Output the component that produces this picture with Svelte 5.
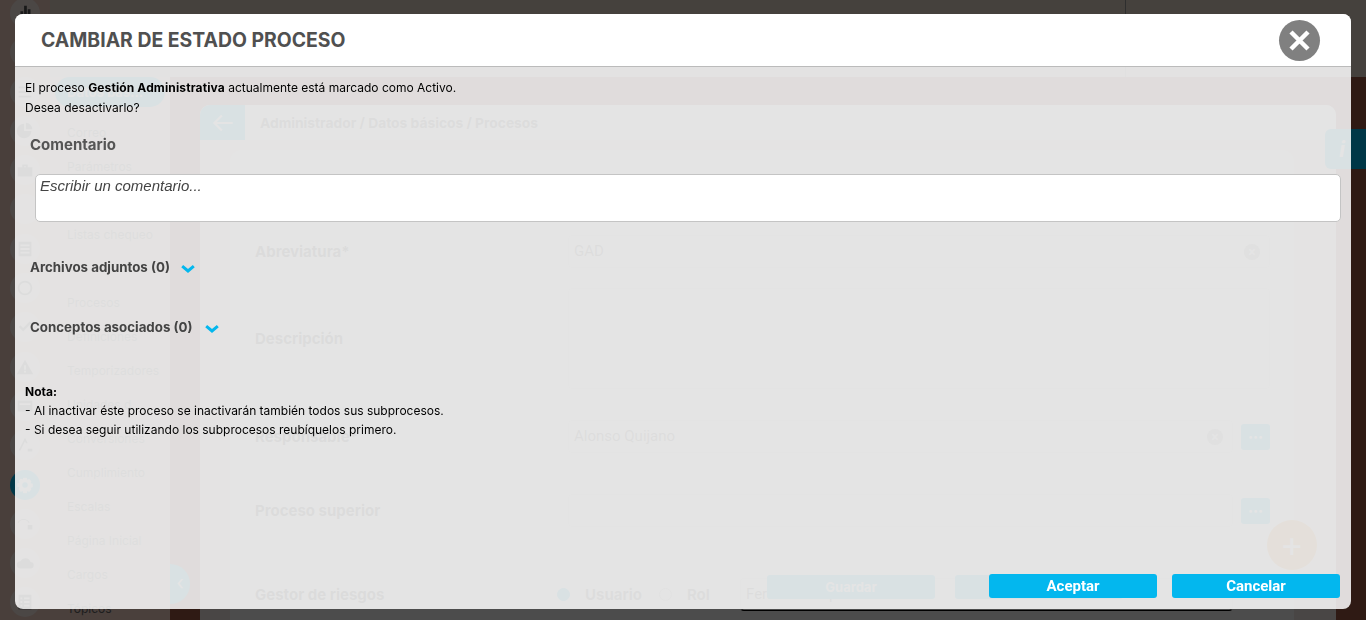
<script>
  const menuItems = ['Correo', 'Parámetros', '', 'Listas chequeo', '', 'Procesos', 'Definiciones', 'Temporizadores', 'Unidades d...', 'Conversiones', 'Cumplimiento', 'Escalas', 'Página Inicial', 'Cargos', 'Tópicos'];

  const railIcons = [
    'M7 16h3V10H7zM11 16h3V4h-3zM15 16h3V8h-3z',
    '',
    'M5 6h14v2H5zM5 11h14v2H5zM5 16h14v2H5z',
    'M11 4a8 8 0 1 0 8 8h-8zM13 3v7h7a7 7 0 0 0-7-7z',
    'M4 9h16v10H4zM9 9V6h6v3h-2V8h-2v1z',
    '',
    'M5 4h14v16H5zM7 7v2h10V7zM7 11v2h10v-2zM7 15v2h10v-2z',
    'M12 4a8 8 0 1 0 0 16 8 8 0 0 0 0-16zm0 2a6 6 0 1 1 0 12 6 6 0 0 1 0-12z',
    'M10 17l-5-5 2-2 3 3 7-7 2 2z',
    'M12 4l9 16H3zM11 10v5h2v-5zM11 16v2h2v-2z',
    'M4 6h16v12H4zM6 9v2h12V9z',
    'M12 4l3 6h-2l-1-2-5 10H5zM15 16h5v3h-5z',
    'M10 4h4l.5 2.4 2-.9 2.5 2.5-1 2 2.5.5v4l-2.5.5 1 2-2.5 2.5-2-1-.5 2.5h-4l-.5-2.5-2 1L5 16.500l1-2L3.500 14v-4L6 9.500l-1-2L7.500 5l2 .9zM12 9a3 3 0 1 0 0 6 3 3 0 0 0 0-6z',
    'M4 10a8 8 0 0 1 13 0l-1 1a6 6 0 0 0-11 0zM15 13h5v5h-5z',
    'M7 18a4 4 0 0 1 0-8 6 6 0 0 1 11 1 3.500 3.500 0 0 1 0 7z',
    'M5 4h14v16H5zM7 7v2h2V7zM11 7v2h6V7zM7 11v2h2v-2zM11 11v2h6v-2zM7 15v2h2v-2zM11 15v2h6v-2z'
  ];
</script>

<div class="page">
  <aside class="rail">
    {#each railIcons as d, i}
      <span class="rail-btn" class:current={i === 12}>
        <svg viewBox="0 0 24 24" width="22" height="22"><path fill-rule="evenodd" {d} /></svg>
      </span>
    {/each}
  </aside>

  <div class="shell">
    <header class="topbar"><span class="divider"></span></header>

    <div class="columns">
      <nav class="menu">
        <div class="menu-pill">Datos bás...</div>
        {#each menuItems as item}
          <div class="menu-item">{item}</div>
        {/each}
      </nav>

      <main class="content">
        <div class="outer-card">
          <div class="crumb">
            <span class="back">
              <svg viewBox="0 0 24 24" width="26" height="26" fill="none" stroke="#fff" stroke-width="2"><path d="M21 12H4M11 5l-7 7 7 7" /></svg>
            </span>
            <span class="crumb-text">Administrador / Datos básicos / Procesos</span>
          </div>

          <div class="form-card">
            <div class="row first">
              <span class="label">Abreviatura*</span>
              <div class="field">GAD<span class="clear">×</span></div>
            </div>
            <div class="row">
              <span class="label">Descripción</span>
              <div class="field tall"></div>
            </div>
            <div class="row gap-m">
              <span class="label">Responsable*</span>
              <div class="field short">Alonso Quijano<span class="clear">×</span></div>
              <span class="dots">•••</span>
            </div>
            <div class="row gap-l">
              <span class="label">Proceso superior</span>
              <div class="field short"></div>
              <span class="dots">•••</span>
            </div>
            <div class="row gap-xl">
              <span class="label">Gestor de riesgos</span>
              <div class="radios">
                <span class="radio on"></span><b>Usuario</b>
                <span class="radio"></span><b>Rol</b>
              </div>
              <div class="field risk">Fernando Izquierdo</div>
            </div>
          </div>
        </div>
      </main>
    </div>
  </div>

  <span class="collapse">‹</span>
  <span class="info">i</span>
  <span class="fab">+</span>
  <div class="page-actions">
    <span class="ghost-btn">Guardar</span>
    <span class="ghost-btn"></span>
  </div>

  <div class="overlay"></div>

  <section class="modal">
    <header class="modal-head">
      <h1>CAMBIAR DE ESTADO PROCESO</h1>
      <button class="close" aria-label="Cerrar">
        <svg viewBox="0 0 41 41" width="41" height="41"><path d="M12 12l17 17M29 12L12 29" stroke="#fff" stroke-width="4.500" /></svg>
      </button>
    </header>

    <div class="modal-body">
      <p class="msg">El proceso <b>Gestión Administrativa</b> actualmente está marcado como Activo.<br />Desea desactivarlo?</p>

      <h2 class="comment-title">Comentario</h2>
      <textarea class="comment" placeholder="Escribir un comentario..."></textarea>

      <div class="toggle archivos">
        Archivos adjuntos (0)
        <svg viewBox="0 0 14 8" width="14" height="8"><path d="M1.200 1.200L7 6l5.800-4.800" fill="none" stroke="#03b7ee" stroke-width="3" /></svg>
      </div>
      <div class="toggle conceptos">
        Conceptos asociados (0)
        <svg viewBox="0 0 14 8" width="14" height="8"><path d="M1.200 1.200L7 6l5.800-4.800" fill="none" stroke="#03b7ee" stroke-width="3" /></svg>
      </div>

      <p class="note"><b>Nota:</b><br />- Al inactivar éste proceso se inactivarán también todos sus subprocesos.<br />- Si desea seguir utilizando los subprocesos reubíquelos primero.</p>

      <footer class="modal-foot">
        <button class="btn">Aceptar</button>
        <button class="btn">Cancelar</button>
      </footer>
    </div>
  </section>
</div>

<style>
  :global(body) {
    margin: 0;
    font-family: Inter, 'Liberation Sans', sans-serif;
  }

  .page {
    position: relative;
    display: flex;
    width: 1366px;
    height: 620px;
    overflow: hidden;
    background: #9d5743;
  }

  /* page behind the dialog */
  .rail {
    flex: 0 0 50px;
    display: flex;
    flex-direction: column;
    align-items: center;
    gap: 9.3px;
    margin-top: -2px;
    background: #f3d2c6;
  }

  .rail-btn {
    flex: 0 0 30px;
    display: flex;
    align-items: center;
    justify-content: center;
    width: 30px;
    border-radius: 50%;
    background: rgba(255, 255, 255, 0.6);
  }

  .rail-btn path {
    fill: #555;
  }

  .rail-btn.current {
    background: #03b7ee;
  }

  .rail-btn.current path {
    fill: #fff;
  }

  .shell {
    flex: 1;
    display: flex;
    flex-direction: column;
    min-width: 0;
  }

  .topbar {
    flex: 0 0 77px;
    position: relative;
    background: #e8d9ce;
  }

  .divider {
    position: absolute;
    left: 1075px;
    top: 0;
    bottom: 0;
    width: 1px;
    background: #999;
  }

  .columns {
    flex: 1;
    display: flex;
    min-height: 0;
  }

  .menu {
    flex: 0 0 120px;
    background: #f7d6ca;
    padding-left: 5px;
    box-sizing: border-box;
  }

  .menu-pill {
    width: 110px;
    height: 30px;
    margin-bottom: 9px;
    padding-left: 12px;
    box-sizing: border-box;
    border-radius: 15px;
    background: #03b7ee;
    color: #fff;
    font-size: 13px;
    font-weight: 700;
    line-height: 30px;
  }

  .menu-item {
    height: 34px;
    padding-left: 12px;
    color: #666;
    font-size: 12px;
    line-height: 34px;
  }

  .content {
    flex: 1;
    padding: 28px 30px 0 30px;
    min-width: 0;
  }

  .outer-card {
    height: 600px;
    border-radius: 10px 10px 0 0;
    background: #f6ece7;
  }

  .crumb {
    display: flex;
    align-items: center;
    height: 35px;
    background: #fff;
    border-radius: 10px 10px 0 0;
  }

  .back {
    display: flex;
    align-items: center;
    justify-content: center;
    width: 45px;
    height: 35px;
    background: #03b7ee;
    border-radius: 10px 0 0 0;
  }

  .crumb-text {
    margin-left: 15px;
    color: #444;
    font-size: 13.8px;
    font-weight: 700;
  }

  .form-card {
    height: 500px;
    margin: 10px 42px 0 30px;
    padding: 85px 24px 0 25px;
    background: #fff;
    border-radius: 12px 12px 0 0;
  }

  .row {
    display: flex;
    align-items: center;
    margin-top: 20px;
  }

  .row.first {
    margin-top: 0;
  }

  .row.gap-m {
    margin-top: 31px;
  }

  .row.gap-l {
    margin-top: 41px;
  }

  .row.gap-xl {
    margin-top: 51px;
  }

  .label {
    flex: 0 0 313px;
    color: #333;
    font-size: 15px;
    font-weight: 700;
  }

  .field {
    position: relative;
    width: 705px;
    height: 33px;
    box-sizing: border-box;
    padding-left: 5px;
    border: 1px solid #eee;
    border-radius: 4px;
    color: #555;
    font-family: Roboto, sans-serif;
    font-size: 15px;
    line-height: 31px;
  }

  .field.tall {
    height: 101px;
  }

  .field.short {
    width: 665px;
  }

  .field.risk {
    width: 493px;
    border-bottom-color: #000;
  }

  .clear {
    position: absolute;
    right: 9px;
    top: 8px;
    width: 16px;
    height: 16px;
    border-radius: 50%;
    background: #999;
    color: #fff;
    font-size: 14px;
    font-weight: 700;
    line-height: 16px;
    text-align: center;
  }

  .dots {
    width: 29px;
    height: 26px;
    margin-left: 8px;
    border-radius: 3px;
    background: #03b7ee;
    color: #fff;
    font-size: 9px;
    line-height: 26px;
    text-align: center;
  }

  .radios {
    flex: 0 0 183px;
    display: flex;
    align-items: center;
    margin-left: -11px;
    color: #555;
    font-size: 15px;
  }

  .radio {
    width: 13px;
    height: 13px;
    box-sizing: border-box;
    margin-right: 15px;
    border: 1px solid #bbb;
    border-radius: 50%;
  }

  .radio.on {
    background: #03b7ee;
    border-color: #03b7ee;
  }

  .radios b + .radio {
    margin-left: 17px;
  }

  .collapse {
    position: absolute;
    left: 170px;
    top: 564px;
    width: 20px;
    height: 40px;
    border-radius: 0 20px 20px 0;
    background: #03b7ee;
    color: #fff;
    font-size: 20px;
    line-height: 38px;
    text-align: center;
  }

  .info {
    position: absolute;
    left: 1325px;
    top: 129px;
    width: 41px;
    height: 40px;
    border-radius: 6px 0 0 6px;
    background: #03b7ee;
    color: #fff;
    font-size: 22px;
    font-style: italic;
    font-weight: 700;
    line-height: 40px;
    padding-left: 14px;
    box-sizing: border-box;
  }

  .fab {
    position: absolute;
    left: 1267px;
    top: 520px;
    width: 50px;
    height: 50px;
    border-radius: 50%;
    background: #f7941d;
    color: #fff;
    font-size: 36px;
    line-height: 48px;
    text-align: center;
  }

  .page-actions {
    position: absolute;
    left: 767px;
    top: 575px;
    display: flex;
    gap: 20px;
  }

  .ghost-btn {
    width: 168px;
    height: 24px;
    border-radius: 3px;
    background: #03b7ee;
    color: #fff;
    font-size: 13px;
    font-weight: 700;
    line-height: 24px;
    text-align: center;
  }

  .overlay {
    position: absolute;
    inset: 0;
    background: rgba(0, 0, 0, 0.7);
  }

  /* dialog */
  .modal {
    position: absolute;
    left: 15px;
    top: 14px;
    display: flex;
    flex-direction: column;
    width: 1336px;
    height: 595px;
    border-radius: 8px;
    overflow: hidden;
    background: rgba(255, 255, 255, 0.85);
    backdrop-filter: blur(0.5px);
  }

  .modal-head {
    flex: 0 0 52px;
    display: flex;
    align-items: center;
    justify-content: space-between;
    padding: 0 31px 0 26px;
    background: #fff;
    border-bottom: 1px solid #bbb;
  }

  h1 {
    margin: 0;
    color: #505050;
    font-size: 19.4px;
    font-weight: 700;
  }

  .close {
    width: 41px;
    height: 41px;
    padding: 0;
    border: 0;
    border-radius: 50%;
    background: #808080;
  }

  .close svg {
    display: block;
  }

  .modal-body {
    flex: 1;
    display: flex;
    flex-direction: column;
    padding: 11px 10px 11px;
    min-height: 0;
  }

  .msg,
  .note {
    margin: 0;
    color: #000;
    font-size: 12px;
    line-height: 20px;
  }

  .msg b {
    letter-spacing: 0.13px;
  }

  .comment-title {
    margin: 17px 0 0 5px;
    color: #555;
    font-size: 15px;
    font-weight: 700;
    line-height: 20px;
  }

  .comment {
    display: block;
    width: 1306px;
    height: 48px;
    margin: 19px 0 0 10px;
    padding: 2px 4px;
    box-sizing: border-box;
    resize: none;
    border: 1px solid #c4c4c4;
    border-radius: 5px;
    background: #fff;
    font-family: 'Liberation Sans', Arial, sans-serif;
    font-size: 15px;
    font-style: italic;
    outline: none;
  }

  .comment::placeholder {
    color: #444;
    opacity: 1;
  }

  .toggle {
    display: flex;
    align-items: center;
    gap: 11px;
    margin-left: 5px;
    color: #444;
    font-size: 13.3px;
    font-weight: 700;
    line-height: 20px;
  }

  .toggle svg {
    margin-top: 3px;
  }

  .archivos {
    margin-top: 35px;
  }

  .conceptos {
    gap: 13px;
    margin-top: 40px;
  }

  .note {
    margin-top: 45px;
    line-height: 19px;
  }

  .modal-foot {
    display: flex;
    justify-content: flex-end;
    gap: 15px;
    margin-top: auto;
    padding-right: 1px;
  }

  .btn {
    width: 168px;
    height: 24px;
    padding: 0;
    border: 0;
    border-radius: 3px;
    background: #03b7ee;
    color: #fff;
    font-family: Roboto, sans-serif;
    font-size: 15px;
    font-weight: 700;
  }
</style>
